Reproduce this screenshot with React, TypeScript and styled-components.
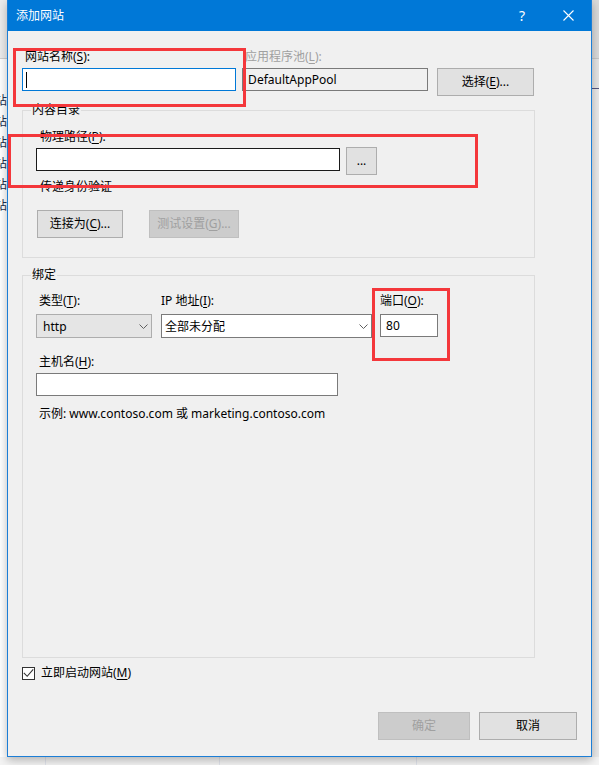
import React from "react";
import styled, { createGlobalStyle } from "styled-components";

const UI_FONT = `"Noto Sans", "Noto Sans CJK SC", sans-serif`;

const GlobalStyle = createGlobalStyle`
  html, body { margin: 0; padding: 0; }
  body {
    font-family: ${UI_FONT};
    font-size: 12px;
    color: #000;
    background: #f4f4f4;
  }
  * { box-sizing: border-box; }
`;

/* ---------- desktop behind the dialog ---------- */

const Desktop = styled.div`
  position: relative;
  width: 599px;
  height: 765px;
  overflow: hidden;
  display: flex;
  align-items: flex-start;
  background-color: #f4f4f4;
  background-image: linear-gradient(
    to right,
    transparent 45px,
    #e1e4ec 45px,
    #e1e4ec 46px,
    transparent 46px,
    transparent 219px,
    #e1e4ec 219px,
    #e1e4ec 220px,
    transparent 220px,
    transparent 416px,
    #e1e4ec 416px,
    #e1e4ec 417px,
    transparent 417px
  );
`;

const SidePane = styled.div`
  flex: none;
  width: 7px;
  height: 757px;
  overflow: hidden;
  background: #fff;
  display: flex;
  flex-direction: column;
`;

const SideHeader = styled.div`
  flex: none;
  height: 59px;
  background: #ececec;
  border-bottom: 1px solid #cfcfcf;
  margin-bottom: 31px;
`;

const SideRow = styled.div`
  flex: none;
  height: 21px;
  line-height: 21px;
  display: flex;
  justify-content: flex-end;
  white-space: nowrap;
  color: #23324f;
  font-size: 12px;
`;

const RightPane = styled.div`
  flex: 1;
  height: 757px;
  display: flex;
  flex-direction: column;
  background: #e9e9e9;
`;

const RightHeader = styled.div`
  flex: none;
  height: 59px;
  background: #dadada;
  border-bottom: 1px solid #c6c6c6;
`;

const RightBand = styled.div`
  flex: none;
  height: 30px;
  background: #e4e4e4;
  border-bottom: 1px solid #55557e;
`;

/* ---------- dialog window ---------- */

const Window = styled.div`
  position: relative;
  z-index: 1;
  flex: none;
  width: 585px;
  height: 757px;
  display: flex;
  flex-direction: column;
  background: #f0f0f0;
  border: 1px solid #1c7ed6;
  border-top: none;
  box-shadow: 0 3px 9px rgba(0, 0, 0, 0.28);
`;

const TitleBar = styled.div`
  flex: none;
  height: 31px;
  display: flex;
  align-items: center;
  padding-left: 8px;
  background: #0078d7;
  color: #fff;
`;

const Title = styled.div`
  flex: 1;
  font-size: 12px;
  line-height: 16px;
`;

const CaptionButton = styled.div`
  width: 46px;
  height: 31px;
  display: flex;
  align-items: center;
  justify-content: center;
  color: #fff;
  font-family: "Noto Sans", sans-serif;
  font-size: 14px;
`;

const Body = styled.div`
  flex: 1;
  min-height: 0;
  display: flex;
  flex-direction: column;
  padding: 18px 14px 16px 14px;
`;

/* ---------- common controls ---------- */

const Key = styled.span`
  text-decoration: underline;
  text-underline-offset: 2px;
  text-decoration-thickness: 1px;
`;

const Label = styled.div<{ $indent?: number; $muted?: boolean; $mt?: number }>`
  height: 16px;
  line-height: 16px;
  font-size: 12px;
  white-space: nowrap;
  padding-left: ${(p) => p.$indent ?? 0}px;
  margin-top: ${(p) => p.$mt ?? 0}px;
  color: ${(p) => (p.$muted ? "#a0a0a0" : "#000")};
`;

const Field = styled.div<{ $w: number; $gap?: number; $ml?: number; $mt?: number }>`
  flex: none;
  width: ${(p) => p.$w}px;
  display: flex;
  flex-direction: column;
  gap: ${(p) => p.$gap ?? 3}px;
  margin-left: ${(p) => p.$ml ?? 0}px;
  margin-top: ${(p) => p.$mt ?? 0}px;
`;

const TextBox = styled.div<{ $w?: number; $border?: string; $fill?: string; $mt?: number }>`
  flex: none;
  width: ${(p) => (p.$w ? `${p.$w}px` : "100%")};
  height: 23px;
  margin-top: ${(p) => p.$mt ?? 0}px;
  display: flex;
  align-items: center;
  padding-left: 2px;
  border: 1px solid ${(p) => p.$border ?? "#7a7a7a"};
  background: ${(p) => p.$fill ?? "#fff"};
  font-size: 12px;
  white-space: nowrap;
  overflow: hidden;
`;

const Caret = styled.span`
  display: block;
  width: 1px;
  height: 16px;
  margin-left: 1px;
  background: #000;
`;

const ComboBox = styled.div<{ $flat?: boolean }>`
  width: 100%;
  height: 24px;
  display: flex;
  align-items: center;
  padding: 0 3px 0 2px;
  border: 1px solid ${(p) => (p.$flat ? "#adadad" : "#7a7a7a")};
  background: ${(p) => (p.$flat ? "#e5e5e5" : "#fff")};
  font-size: 12px;
`;

const ComboText = styled.span`
  flex: 1;
  padding-left: 1px;
  white-space: nowrap;
`;

const PushButton = styled.button<{ $w: number; $mt?: number; $ml?: number }>`
  flex: none;
  width: ${(p) => p.$w}px;
  height: 28px;
  margin: ${(p) => p.$mt ?? 0}px 0 0 ${(p) => p.$ml ?? 0}px;
  padding: 0;
  border: 1px solid #adadad;
  background: #e1e1e1;
  color: #000;
  font-family: ${UI_FONT};
  font-size: 12px;
  line-height: 16px;
  white-space: nowrap;
  cursor: default;

  &:disabled {
    border-color: #bfbfbf;
    background: #cccccc;
    color: #a0a0a0;
  }
`;

/* ---------- layout blocks ---------- */

const TopRow = styled.div`
  display: flex;
  align-items: flex-start;
`;

const Group = styled.fieldset<{ $mt: number; $grow?: boolean }>`
  flex: ${(p) => (p.$grow ? "1" : "none")};
  width: 513px;
  min-width: 0;
  margin: ${(p) => p.$mt}px 0 0 0;
  padding: 0;
  border: 1px solid #dcdcdc;
`;

const Legend = styled.legend`
  margin-left: 8px;
  padding: 0 1px;
  height: 16px;
  line-height: 16px;
  font-size: 12px;
`;

const GroupBody = styled.div<{ $pt: number; $pb: number }>`
  padding: ${(p) => p.$pt}px 0 ${(p) => p.$pb}px 13px;
  display: flex;
  flex-direction: column;
  align-items: flex-start;
`;

const PathRow = styled.div`
  display: flex;
  align-items: flex-start;
  gap: 6px;
  margin-top: 2px;
`;

const ButtonRow = styled.div<{ $mt?: number }>`
  display: flex;
  gap: 26px;
  margin-top: ${(p) => p.$mt ?? 0}px;
  padding-left: 1px;
`;

const BindRow = styled.div`
  display: flex;
  align-items: flex-start;
`;

const CheckRow = styled.label`
  flex: none;
  height: 16px;
  margin-top: 7px;
  display: flex;
  align-items: flex-start;
  gap: 6px;
  font-size: 12px;
  line-height: 16px;
`;

const CheckBox = styled.span`
  flex: none;
  width: 13px;
  height: 13px;
  margin-top: 2px;
  border: 1px solid #333;
  background: #fff;
  display: flex;
`;

const Footer = styled.div`
  flex: none;
  margin-top: 31px;
  display: flex;
  justify-content: flex-end;
  gap: 9px;
`;

/* red call-out frames drawn over the dialog */
const Callout = styled.div`
  position: absolute;
  z-index: 2;
  border: 3px solid #f4373b;
  pointer-events: none;
`;

/* ---------- icons ---------- */

const CloseGlyph = () => (
  <svg width="11" height="11" viewBox="0 0 11 11">
    <path d="M0.5 0.5 L10.5 10.5 M10.5 0.5 L0.5 10.5" stroke="#fff" strokeWidth="1.1" fill="none" />
  </svg>
);

const Chevron = () => (
  <svg width="9" height="5" viewBox="0 0 9 5">
    <path d="M0.5 0.5 L4.5 4.5 L8.5 0.5" stroke="#606060" strokeWidth="1" fill="none" />
  </svg>
);

const Tick = () => (
  <svg width="11" height="11" viewBox="0 0 11 11">
    <path d="M0.8 4.8 L4.2 8.3 L10.2 1.3" stroke="#333" strokeWidth="1.1" fill="none" />
  </svg>
);

const sideItems = ["默认网站", "默认网站", "默认网站", "默认网站", "默认网站", "默认网站"];

export default function App() {
  return (
    <>
      <GlobalStyle />
      <Desktop>
        <SidePane>
          <SideHeader />
          {sideItems.map((t, i) => (
            <SideRow key={i}>{t}</SideRow>
          ))}
        </SidePane>

        <Window>
          <TitleBar>
            <Title>添加网站</Title>
            <CaptionButton>?</CaptionButton>
            <CaptionButton>
              <CloseGlyph />
            </CaptionButton>
          </TitleBar>

          <Body>
            <TopRow>
              <Field $w={214}>
                <Label $indent={3}>
                  网站名称(<Key>S</Key>):
                </Label>
                <TextBox $border="#0078d7">
                  <Caret />
                </TextBox>
              </Field>
              <Field $w={186} $ml={6}>
                <Label $indent={3} $muted>
                  应用程序池(<Key>L</Key>):
                </Label>
                <TextBox $fill="#f0f0f0">&nbsp;DefaultAppPool</TextBox>
              </Field>
              <PushButton $w={97} $mt={19} $ml={9}>
                选择(<Key>E</Key>)...
              </PushButton>
            </TopRow>

            <Group $mt={6}>
              <Legend>内容目录</Legend>
              <GroupBody $pt={11} $pb={19}>
                <Label $indent={4}>
                  物理路径(<Key>P</Key>):
                </Label>
                <PathRow>
                  <TextBox $w={304} $border="#1a1a1a" $mt={1} />
                  <PushButton $w={31}>...</PushButton>
                </PathRow>
                <Label $indent={4} $mt={4}>
                  传递身份验证
                </Label>
                <ButtonRow $mt={15}>
                  <PushButton $w={86}>
                    连接为(<Key>C</Key>)...
                  </PushButton>
                  <PushButton $w={90} disabled>
                    测试设置(<Key>G</Key>)...
                  </PushButton>
                </ButtonRow>
              </GroupBody>
            </Group>

            <Group $mt={9} $grow>
              <Legend>绑定</Legend>
              <GroupBody $pt={10} $pb={0}>
                <BindRow>
                  <Field $w={116} $gap={5}>
                    <Label $indent={3}>
                      类型(<Key>T</Key>):
                    </Label>
                    <ComboBox $flat>
                      <ComboText>&nbsp;http</ComboText>
                      <Chevron />
                    </ComboBox>
                  </Field>
                  <Field $w={211} $gap={5} $ml={9}>
                    <Label>
                      IP 地址(<Key>I</Key>):
                    </Label>
                    <ComboBox>
                      <ComboText>全部未分配</ComboText>
                      <Chevron />
                    </ComboBox>
                  </Field>
                  <Field $w={58} $gap={5} $ml={8}>
                    <Label>
                      端口(<Key>O</Key>):
                    </Label>
                    <TextBox>&nbsp;80</TextBox>
                  </Field>
                </BindRow>
                <Field $w={302} $mt={16}>
                  <Label $indent={3}>
                    主机名(<Key>H</Key>):
                  </Label>
                  <TextBox />
                </Field>
                <Label $indent={3} $mt={10}>
                  示例: www.contoso.com 或 marketing.contoso.com
                </Label>
              </GroupBody>
            </Group>

            <CheckRow>
              <CheckBox>
                <Tick />
              </CheckBox>
              <span>
                立即启动网站(<Key>M</Key>)
              </span>
            </CheckRow>

            <Footer>
              <PushButton $w={92} disabled>
                确定
              </PushButton>
              <PushButton $w={98}>取消</PushButton>
            </Footer>
          </Body>
        </Window>

        <RightPane>
          <RightHeader />
          <RightBand />
        </RightPane>

        <Callout style={{ left: 13, top: 48, width: 233, height: 59 }} />
        <Callout style={{ left: 8, top: 134, width: 470, height: 54 }} />
        <Callout style={{ left: 372, top: 288, width: 78, height: 73 }} />
      </Desktop>
    </>
  );
}
